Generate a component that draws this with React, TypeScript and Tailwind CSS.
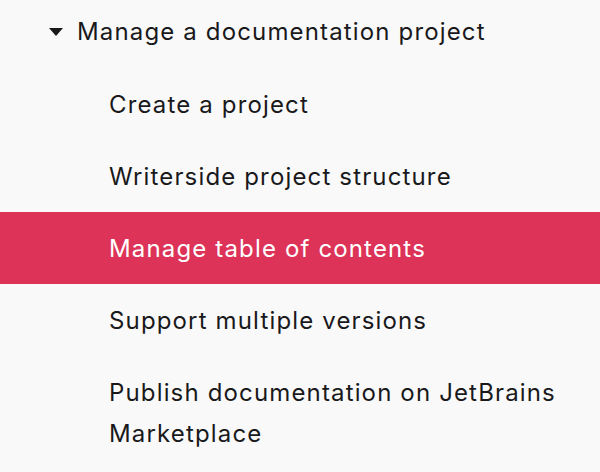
export default function App() {
  const items = [
    { label: "Create a project" },
    { label: "Writerside project structure" },
    { label: "Manage table of contents", active: true },
    { label: "Support multiple versions" },
    { label: "Publish documentation on JetBrains Marketplace" },
  ];

  return (
    <div
      className="h-[472px] w-[600px] overflow-hidden bg-[#f9f9f9] text-[24px] leading-[41px] tracking-[1.15px] text-[#19191c]"
      style={{ fontFamily: "Inter, 'Noto Sans', sans-serif" }}
    >
      {/* Section header */}
      <div className="flex items-center pt-[11px] pb-[16px] pl-[48px] pr-[32px]">
        <svg width="16" height="10" viewBox="0 0 16 10" className="mr-[13px] shrink-0">
          <path d="M1 1 L15 1 L8 9 Z" fill="#19191c" />
        </svg>
        <span>Manage a documentation project</span>
      </div>

      {/* Children */}
      <ul>
        {items.map((item) => (
          <li
            key={item.label}
            className={
              item.active
                ? "bg-[#dd3358] py-[15.5px] pl-[109px] pr-[32px] text-white"
                : "py-[15.5px] pl-[109px] pr-[32px]"
            }
          >
            {item.label}
          </li>
        ))}
      </ul>
    </div>
  );
}
